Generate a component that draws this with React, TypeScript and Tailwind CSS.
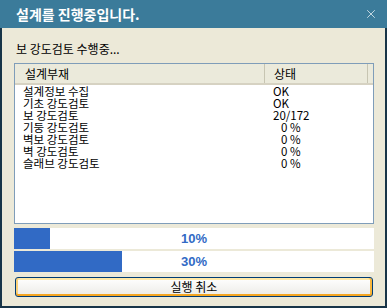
import { X } from 'lucide-react';

const rows = [
  { name: '설계정보 수집', status: 'OK', indent: false },
  { name: '기초 강도검토', status: 'OK', indent: false },
  { name: '보 강도검토', status: '20/172', indent: false },
  { name: '기둥 강도검토', status: '0 %', indent: true },
  { name: '벽보 강도검토', status: '0 %', indent: true },
  { name: '벽 강도검토', status: '0 %', indent: true },
  { name: '슬래브 강도검토', status: '0 %', indent: true },
];

const font = { fontFamily: '"Noto Sans CJK KR", "Noto Sans", sans-serif' };

function ProgressBar({ percent }: { percent: number }) {
  return (
    <div className="relative h-[21px] w-full bg-white">
      <div className="h-full bg-[#316ac5]" style={{ width: `${percent}%` }} />
      <div className="absolute inset-0 flex items-center justify-center font-['Liberation_Sans',sans-serif] text-[13px] font-bold text-[#316ac5]">
        {percent}%
      </div>
    </div>
  );
}

export default function App() {
  return (
    <div className="flex h-[308px] w-[387px] flex-col bg-[#ece9d8] text-[12px] text-black" style={font}>
      {/* Title bar */}
      <div className="flex h-[28px] shrink-0 items-center justify-between bg-[#3b7b9a] pl-[16px] pr-[9px]">
        <span className="text-[14px] font-bold text-white">설계를 진행중입니다.</span>
        <X className="h-[14px] w-[14px] text-[#d5e3ea]" strokeWidth={1.5} />
      </div>

      {/* Body */}
      <div className="flex flex-1 flex-col border-x-2 border-b-2 border-[#183548] pl-[12px] pr-[11px]">
        <div className="mt-[12px] h-[18px] pl-[2px] leading-[18px]">보 강도검토 수행중...</div>

        {/* List view */}
        <div className="mt-[5px] h-[161px] border border-[#7f9db9] bg-white">
          <div className="flex h-[21px] border-b-2 border-[#d6d2c2] bg-[#ebeadb]">
            <div className="flex w-[250px] items-center border-r border-[#c7c5b2] pl-[10px]">설계부재</div>
            <div className="flex w-[103px] items-center border-r border-[#c7c5b2] pl-[9px]">상태</div>
            <div className="flex-1" />
          </div>
          <div className="flex flex-col">
            {rows.map((r) => (
              <div key={r.name} className="flex h-[12px] text-[11.5px] leading-[12px]">
                <div className="w-[250px] pl-[8px]">{r.name}</div>
                <div className={r.indent ? 'pl-[16px]' : 'pl-[8px]'}>{r.status}</div>
              </div>
            ))}
          </div>
        </div>

        {/* Progress */}
        <div className="mt-[4px] flex flex-col gap-[2px]">
          <ProgressBar percent={10} />
          <ProgressBar percent={30} />
        </div>

        {/* Cancel button */}
        <button
          type="button"
          className="ml-[1px] mr-[1px] mt-[5px] h-[20px] rounded-[3px] border border-[#003c74] bg-gradient-to-b from-[#ffffff] to-[#ecebe6] text-[12px] leading-none shadow-[inset_0_-2px_0_#f5a623,inset_2px_0_0_#fbd27a,inset_-2px_0_0_#f8b63c,inset_0_2px_0_#ffe9a8]"
        >
          실행 취소
        </button>
      </div>
    </div>
  );
}
